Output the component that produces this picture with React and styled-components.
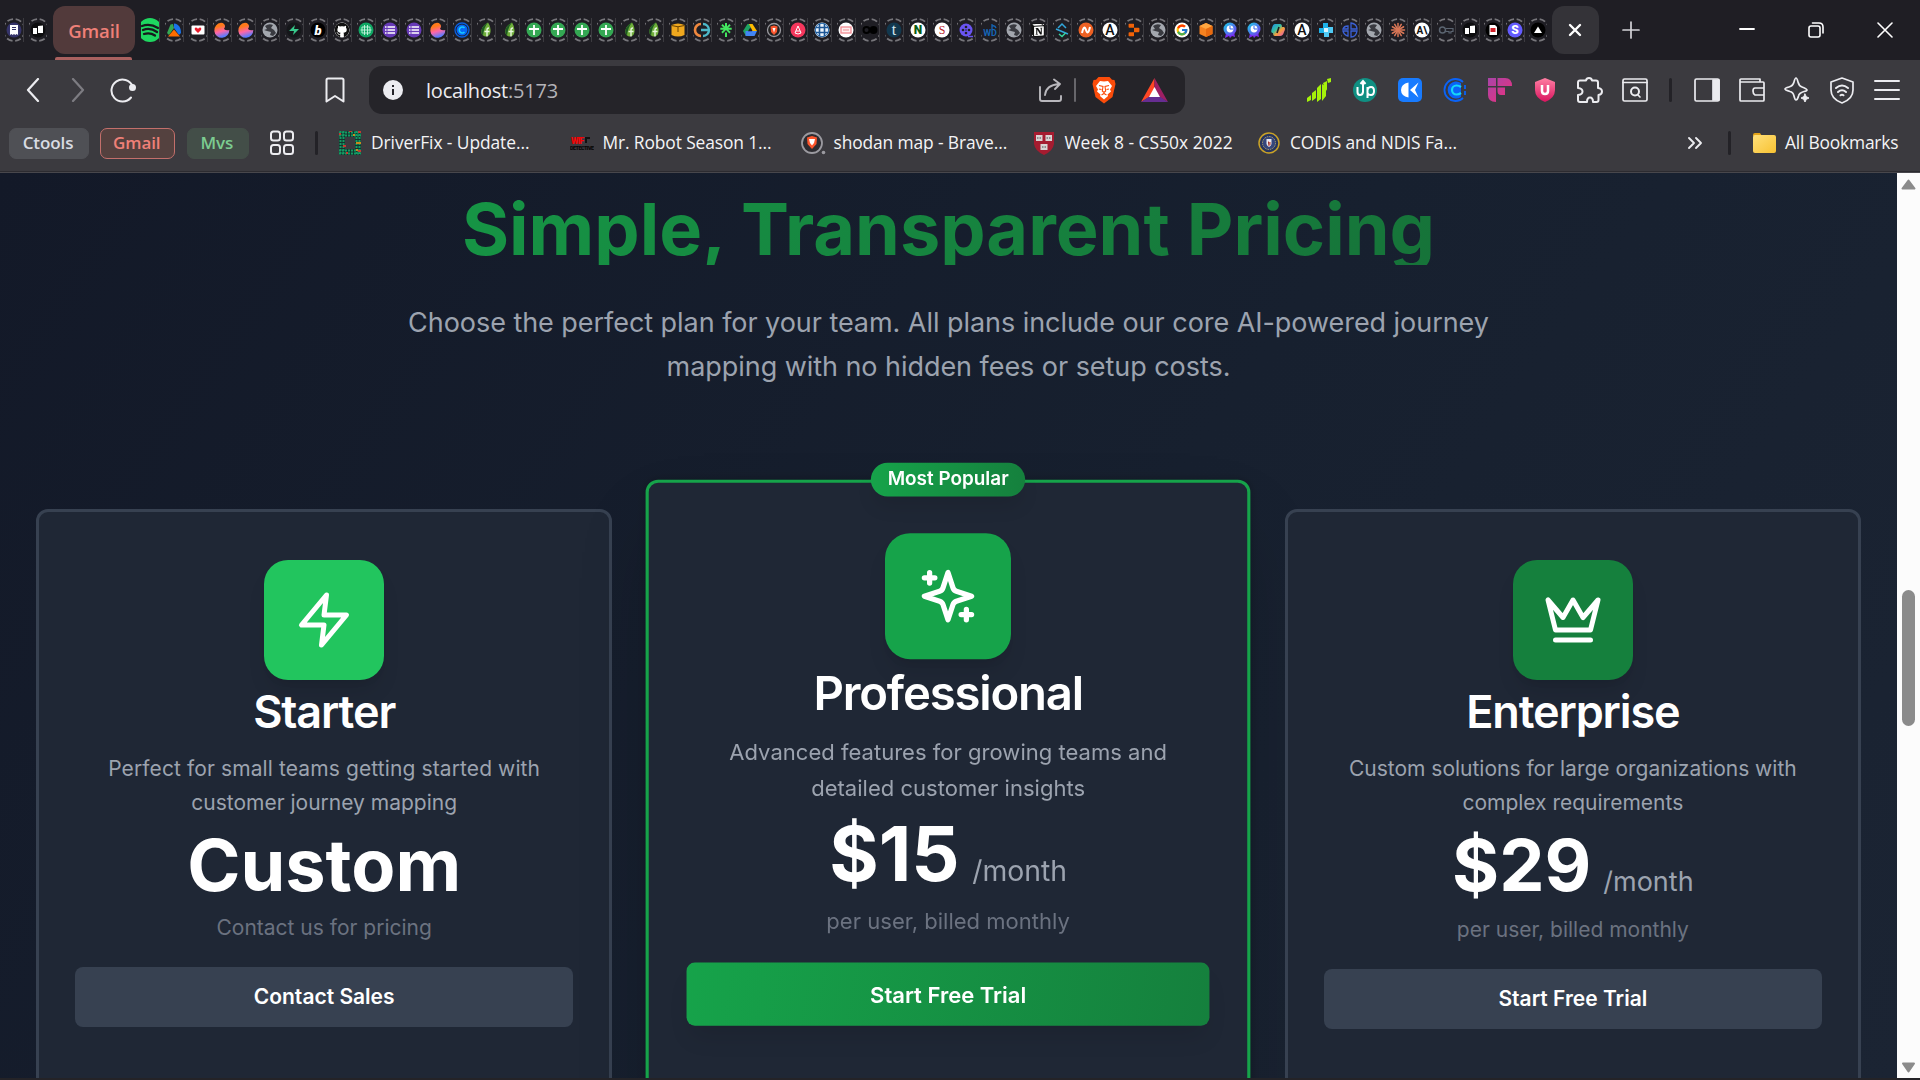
import React from "react";
import styled, { createGlobalStyle, css } from "styled-components";
import { FcGoogle } from "react-icons/fc";
import { FaGithub } from "react-icons/fa";
import { SiNotion, SiReplit, SiLinktree } from "react-icons/si";

const GlobalStyle = createGlobalStyle`
  * { box-sizing: border-box; }
  html, body { margin: 0; padding: 0; overflow: hidden; }
  body { background: #1f1e24; }
`;

const UI_FONT = `"Open Sans", "Noto Sans", sans-serif`;

const Window = styled.div`
  width: 1920px;
  height: 1080px;
  overflow: hidden;
  display: flex;
  flex-direction: column;
  background: #242327;
  font-family: ${UI_FONT};
  color: #f2f1f5;
  svg { display: block; flex: none; }
`;

/* ---------- tab strip ---------- */
const TabStrip = styled.div`
  height: 60px;
  flex: none;
  display: flex;
  align-items: center;
  background: #1f1e24;
  padding-left: 1.5px;
`;
const TabCell = styled.div`
  width: ${(p) => p.$w || 24}px;
  height: 24px;
  flex: none;
  display: flex;
  align-items: center;
  justify-content: space-between;
  &::before {
    content: "";
    width: 1px;
    height: 24px;
    background: ${(p) => (p.$line ? "#3c3b40" : "transparent")};
  }
`;
const TabGroup = styled.div`
  width: 82px;
  height: 60px;
  flex: none;
  margin: 0 2px 0 6.5px;
  display: flex;
  flex-direction: column;
  align-items: center;
  padding-top: 6px;
`;
const TabGroupLabel = styled.div`
  width: 82px;
  height: 48px;
  border-radius: 12px;
  background: #523a3b;
  color: #ef8078;
  font-size: 18.5px;
  font-weight: 600;
  letter-spacing: -0.1px;
  display: flex;
  align-items: center;
  justify-content: center;
`;
const TabGroupLine = styled.div`
  width: 77px;
  height: 3px;
  margin-top: 3px;
  margin-right: 1px;
  border-radius: 2px 2px 0 0;
  background: #a9615f;
`;
const ActiveTab = styled.div`
  width: 47px;
  height: 48px;
  flex: none;
  margin-left: 5px;
  border-radius: 12px;
  background: #343338;
  display: flex;
  align-items: center;
  justify-content: center;
`;
const StripButton = styled.div`
  width: ${(p) => p.$w}px;
  display: flex;
  justify-content: center;
`;

/* ---------- toolbar ---------- */
const Toolbar = styled.div`
  height: 60px;
  flex: none;
  display: flex;
  align-items: center;
  background: #3b3a3f;
  padding-left: 10px;
`;
const ToolCell = styled.div`
  width: 45px;
  height: 45px;
  flex: none;
  display: flex;
  align-items: center;
  justify-content: center;
`;
const Spacer = styled.div`
  width: ${(p) => p.$w}px;
  flex: none;
`;
const AddressBar = styled.div`
  width: 816px;
  height: 48px;
  margin: 0 112px 0 12px;
  flex: none;
  border-radius: 13px;
  background: #252429;
  display: flex;
  align-items: center;
  padding: 0 17px 0 14px;
`;
const Url = styled.div`
  margin-left: 23px;
  flex: 1;
  font-size: 20px;
  letter-spacing: -0.2px;
  color: #ececf0;
  span { color: #b4b3b8; }
`;
const Rule = styled.div`
  width: ${(p) => p.$w || 3}px;
  height: 24px;
  flex: none;
  border-radius: 2px;
  background: ${(p) => p.$color || "#232227"};
  margin: 0 ${(p) => p.$m || 0}px;
`;

/* ---------- bookmarks ---------- */
const Bookmarks = styled.div`
  height: 53px;
  flex: none;
  display: flex;
  align-items: center;
  padding: 0 22px 6px 9px;
  background: #3b3a3f;
  border-bottom: 1px solid #48474c;
  box-shadow: inset 0 -1px 0 #2c2b30;
`;
const tones = {
  grey: css`background: #4f5055; color: #d9dce3; border-color: #4f5055;`,
  red: css`background: #54413f; color: #ef8078; border-color: #c36f6b;`,
  green: css`background: #434e48; color: #7ccb90; border-color: #434e48;`,
};
const Chip = styled.div`
  width: ${(p) => p.$w}px;
  height: 31px;
  flex: none;
  margin-right: 11.5px;
  border: 1.5px solid;
  border-radius: 7px;
  padding: 0 1.5px 2px 0;
  font-size: 17px;
  font-weight: 600;
  letter-spacing: -0.1px;
  display: flex;
  align-items: center;
  justify-content: center;
  ${(p) => tones[p.$tone]}
`;
const Bookmark = styled.div`
  width: ${(p) => p.$w}px;
  flex: none;
  display: flex;
  align-items: center;
  white-space: nowrap;
  font-size: 17.4px;
  letter-spacing: ${(p) => p.$ls || 0}px;
  color: #f4f4f6;
`;
const BookmarkIcon = styled.div`
  width: 24px;
  margin-right: 9px;
  flex: none;
  display: flex;
  justify-content: center;
`;
const BookmarkText = styled.span`
  padding-bottom: 2px;
`;

/* ---------- page ---------- */
const Body = styled.div`
  height: 905px;
  flex: none;
  display: flex;
`;
const Page = styled.main`
  width: 1897px;
  height: 905px;
  overflow: hidden;
  padding: 20px 36px 0;
  background: linear-gradient(125deg, #131928 0%, #17202f 55%, #1b2433 100%);
  font-family: Inter, sans-serif;
  text-align: center;
`;
const Heading = styled.h2`
  margin: 0;
  font-size: 72px;
  line-height: 72px;
  font-weight: 700;
  color: transparent;
  background: linear-gradient(135deg, #16a34a 0%, #166534 100%);
  background-clip: text;
  -webkit-background-clip: text;
`;
const Lead = styled.p`
  margin: 36px auto 0;
  width: 1152px;
  font-size: 27px;
  line-height: 43.875px;
  letter-spacing: -0.05px;
  color: #9ca3af;
`;
const Grid = styled.div`
  margin-top: 120px;
  display: grid;
  grid-template-columns: repeat(3, 1fr);
  gap: 48px;
`;
const Card = styled.section`
  position: relative;
  height: 1175px;
  border: 3px solid ${(p) => (p.$featured ? "#16a34a" : "#374151")};
  border-radius: 12px;
  background: #1f2735;
  padding: 48px 36px 0;
  display: flex;
  flex-direction: column;
  align-items: center;
  ${(p) => p.$featured && css`
    transform: scale(1.05);
    box-shadow: 0 0 9px rgba(0, 0, 0, 0.2), 0 38px 75px -18px rgba(0, 0, 0, 0.25);
  `}
`;
const Badge = styled.div`
  position: absolute;
  top: -19.5px;
  left: 50%;
  transform: translateX(-50%);
  width: 147px;
  height: 32px;
  border-radius: 16px;
  padding-bottom: 1.5px;
  font-size: 18px;
  font-weight: 600;
  color: #fff;
  white-space: nowrap;
  display: flex;
  align-items: center;
  justify-content: center;
  background: linear-gradient(90deg, #16a34a, #15803d);
  box-shadow: 0 12px 18px -3px rgba(0, 0, 0, 0.1);
`;
const Tile = styled.div`
  width: 120px;
  height: 120px;
  flex: none;
  border-radius: 24px;
  background: ${(p) => p.$color};
  display: flex;
  align-items: center;
  justify-content: center;
  box-shadow: 0 15px 22px -5px rgba(0, 0, 0, 0.1), 0 6px 9px -6px rgba(0, 0, 0, 0.1);
`;
const PlanName = styled.h3`
  margin: 9px 0 0;
  font-size: 45px;
  line-height: 45px;
  font-weight: 600;
  letter-spacing: -1.125px;
  color: #fff;
`;
const Description = styled.p`
  margin: 18px 0 0;
  width: 450px;
  font-size: 21px;
  line-height: 34.125px;
  color: #9ca3af;
`;
const Line = styled.span`
  display: block;
  letter-spacing: ${(p) => p.$track || 0}px;
`;
const Price = styled.div`
  margin-top: 9px;
  height: ${(p) => (p.$unit ? 74 : 72)}px;
  font-size: 72px;
  line-height: 72px;
  font-weight: 700;
  color: #fff;
  display: flex;
  align-items: baseline;
`;
const Unit = styled.span`
  margin-left: 12px;
  font-size: 27px;
  line-height: 42px;
  font-weight: 400;
  color: #9ca3af;
`;
const Billing = styled.p`
  margin: 12px 0 24px;
  font-size: 21px;
  line-height: 30px;
  color: #6b7280;
`;
const Action = styled.button`
  width: 100%;
  height: 60px;
  flex: none;
  border: 0;
  border-radius: 8px;
  padding: 0 0 2px;
  font-family: inherit;
  font-size: 21px;
  font-weight: 600;
  color: #fff;
  background: #374151;
  ${(p) => p.$featured && css`
    padding-bottom: 0.5px;
    background: linear-gradient(100deg, #16a34a, #15803d);
    box-shadow: 0 15px 22px -5px rgba(0, 0, 0, 0.1);
  `}
`;

const ScrollBar = styled.div`
  width: 23px;
  height: 905px;
  background: #fcfcfc;
  display: flex;
  flex-direction: column;
  align-items: center;
  padding: 6px 0 5px;
`;
const Thumb = styled.div`
  width: 13px;
  height: 136px;
  margin: 400px 0 auto;
  border-radius: 7px;
  background: #8b8b8b;
`;

/* ---------- favicons ---------- */
const Dot = ({ fill = "#fff" }) => <circle cx="0" cy="0" r="7.5" fill={fill} />;
const Letter = ({ children, fill = "#fff", size = 11, weight = 700, font = "Roboto", y = 4, italic }) => (
  <text x="0" y={y} fill={fill} fontSize={size} fontWeight={weight} fontFamily={font} fontStyle={italic ? "italic" : "normal"} textAnchor="middle">{children}</text>
);
const Placed = ({ icon: Icon, color, size = 14 }) => (
  <Icon x={-size / 2} y={-size / 2} size={size} color={color} />
);

const art = {
  receipt: <><Dot fill="#35346a" /><path d="M-4-5H4V5L2.6 4 1.3 5 0 4-1.3 5-2.6 4-4 5Z" fill="#fff" /><path d="M-2-2.5h4M-2-.5h4" stroke="#35346a" /></>,
  cards: <><Dot fill="#0d0d0f" /><path d="M-5-2h4v6h-4zM0-4l5-.6V3H0z" fill="#fff" /></>,
  peaks: <><path d="M-7 3 -3.500-5.500-1-6 0-2-5 5z" fill="#34a853" /><path d="M0-6.500C5-6 7-2 7 3L5 5 0-2z" fill="#1a73e8" /><path d="M-6 6.500 0-.5 6 6.500z" fill="#ff6d00" /></>,
  mail: <><rect x="-6.5" y="-4.5" width="13" height="9" rx="1" fill="#fff" /><path d="M0 3-3 0q-1-2 1-2.500 1.500 0 2 1.500.5-1.500 2-1.500 2 .5 1 2.500z" fill="#ea1c2c" /></>,
  pie: <path d="M-1-7.200A7.500 7.500 0 1 0 7.300 0Q4 1 2-1 4-4 2-6 1-7.200-1-7.200Z" fill="url(#sunset)" />,
  globe: <><Dot fill="#a3a7ae" /><path d="M-5-4Q-1-7 3-5L1-2 4 0 6 3 3 6 0 5 1 2-3 1-6 0-3-1Z" fill="#393a40" /></>,
  bolt: <><Dot fill="#15171a" /><path d="M1-5-5 1H0L-1 5 5-1H0Z" fill="#37c98b" /></>,
  b: <><Dot fill="#000" /><Letter italic size={13} weight={900} y={4.500}>b</Letter></>,
  github: <><Dot /><Placed icon={FaGithub} color="#111" size={15} /></>,
  chip: <><Dot fill="#10a764" /><path d="M-4-3H4V3H-4ZM-1.500-5V5M1.500-5V5M-5.500 0H5.500" fill="none" stroke="#c8f5e0" strokeWidth="0.9" /></>,
  list: <><Dot fill="#673ab7" /><path d="M-2.500-3H5M-2.500 0H5M-2.500 3H5" stroke="#fff" strokeWidth="1.700" /><path d="M-5-3h1.500M-5 0h1.500M-5 3h1.500" stroke="#fff" strokeWidth="1.700" /></>,
  calC: <><circle r="7" fill="none" stroke="#0a5fe0" strokeWidth="1.300" /><circle r="5.500" fill="#0567f5" /><path d="M2.500-2A3 3 0 1 0 2.500 2" fill="none" stroke="#19c8ff" strokeWidth="1.600" /></>,
  leaf: <><path d="M2-7.500Q5-3 4.500 2 4 6.500-1 6.500-5.500 5-4.500 0-4-4 2-7.500Z" fill="#6fae3a" /><path d="M2-7.500Q-4-4-4.500 0-5 4-3 5.500-2-3 2-7.500Z" fill="#1d5a22" /><path d="M1 6.500V0Q1-2 3-2M-1.500 1.500H3.500" stroke="#e8f8df" strokeWidth="1.400" fill="none" /></>,
  sheet: <><Dot fill="#34a853" /><path d="M0-5V5M-5-1H5" stroke="#fff" strokeWidth="1.800" /></>,
  box: <><path d="M-6.500-5Q0-8 6.500-5V5Q0 8-6.500 5Z" fill="#f0a81e" /><path d="M-6.500-4.500Q0-2 6.500-4.500M0-3v5" stroke="#6a4300" fill="none" /></>,
  split: <><path d="M-1-6A6 6 0 0 0-1 6" fill="none" stroke="#f0883e" strokeWidth="2.600" /><path d="M1-6A6 6 0 0 1 1 6M-1 0H6" fill="none" stroke="#4db8c8" strokeWidth="2.400" /></>,
  tree: <Placed icon={SiLinktree} color="#43e660" size={14} />,
  drive: <><path d="M-2.500-6H2.500L0-1-4 6-7 1Z" fill="#1ea362" /><path d="M-1-6H2.500L7 1H2.500Z" fill="#ffba00" /><path d="M-4.500 1H7L4.500 6H-4.500Z" fill="#4285f4" /><path d="M0-2 2 1.200h-4Z" fill="#1f1e24" /></>,
  brave: <><circle r="6.500" fill="#222" stroke="#9a9aa0" strokeWidth="1.300" /><path d="M-3.500-3.500 0-4.500 3.500-3.500 3 2 0 5-3 2Z" fill="#fb542b" /><path d="M-1.500-2H1.500L0 2.500Z" fill="#fff" /></>,
  red: <><Dot fill="#f5365c" /><path d="M-3 3 0-4 3 3Q0 5-3 3ZM-2 1H2" fill="none" stroke="#fff" /></>,
  grid: <><Dot fill="#e9f2fb" /><path d="M-6.500-2.500H6.500M-6.500 2.500H6.500M-2.500-6.500V6.500M2.500-6.500V6.500" stroke="#1d5695" strokeWidth="1.600" /><circle r="6.700" fill="none" stroke="#2667a8" /></>,
  pink: <><Dot /><rect x="-5" y="-3" width="10" height="6" fill="#fff0f0" stroke="#f28b92" strokeWidth="1.300" /><path d="M-3 0H3" stroke="#f28b92" /></>,
  co: <><circle cx="-3.500" r="3" fill="none" stroke="#000" strokeWidth="2" /><circle cx="3.500" r="4" fill="#000" /></>,
  t: <><Dot fill="#12384e" /><Letter fill="#d5e9ee" size={16} weight={400} font="Liberation Serif" y={5}>t</Letter></>,
  n: <><Dot /><Letter fill="#0a5c14" size={12} weight={900}>N</Letter></>,
  s: <><Dot /><Letter fill="#b7212c" size={12} weight={500} font="Liberation Serif">S</Letter></>,
  film: <><circle r="6.500" fill="#6a55f2" /><path d="M2 6.500H7" stroke="#6a55f2" strokeWidth="1.500" /><g fill="#1f1e24"><circle r="0.8" /><circle cx="-3" r="1.300" /><circle cx="3" r="1.300" /><circle cy="-3" r="1.300" /><circle cy="3" r="1.300" /></g></>,
  wd: <><Letter fill="#1565b5" size={9} y={6}>WD</Letter><path d="M2-1V-6M2-4Q5-5 6-2" stroke="#1565b5" fill="none" strokeWidth="1.300" /></>,
  notion: <><rect x="-6" y="-6" width="12" height="12" fill="#fff" /><Placed icon={SiNotion} color="#111" size={14} /></>,
  arrows: <><path d="M-4-2 0-6 4-2M-6-1 6 4" stroke="#31a7dc" fill="none" strokeWidth="1.500" /><path d="M-3 4 0 6.500 3.500 3" stroke="#38d39f" fill="none" strokeWidth="1.500" /></>,
  wave: <><Dot fill="#ee6123" /><path d="M-4 3Q-2-6 0 0T4-3" fill="none" stroke="#fff" strokeWidth="2" /></>,
  a: <><Dot /><Letter fill="#101010" size={14} weight={500} y={5}>A</Letter></>,
  replit: <Placed icon={SiReplit} color="#f26207" size={13} />,
  google: <><Dot /><Placed icon={FcGoogle} size={13} /></>,
  cube: <><path d="M0-7 6.500-4V4L0 7-6.500 4V-4Z" fill="#f58220" /><path d="M-6.500-4 0-1 6.500-4 0-7Z" fill="#ffa640" /><path d="M0-1V7L6.500 4V-4Z" fill="#e76a10" /></>,
  medal: <><path d="M-4 3-5 8-1 6 0 8 2 6 5 7 4 2Z" fill="#7a2df0" /><circle cy="-1" r="6.500" fill="url(#ocean)" /><circle cy="-1" r="3.400" fill="#fff" /><path d="M0-4V-1H3" stroke="#3468f0" fill="none" /></>,
  copilot: <><path d="M-3-6H2Q4-6 4-3H6Q8-2 6 2 5 6 2 6H-3Q-5 6-5 3-8 3-6-2-5-6-3-6Z" fill="url(#rainbow)" /><path d="M1-3-1 3" stroke="#1f1e24" strokeWidth="1.600" /></>,
  blocks: <><path d="M-3-7H2V-2H-3ZM-7-2H-2V3H-7Z" fill="#1db2e8" /><path d="M2-3H7V3H2ZM-2 2H3V7H-2Z" fill="#4fc9f3" /><path d="M-2-2H2V2H-2Z" fill="#d8f3fc" /></>,
  quads: <path d="M1-7Q7-6 7-1H1ZM-2-4V-1H-7Q-6-4-2-4ZM-2 6Q-6 5-7 1H-2ZM1 1H7Q6 7 1 7Z" fill="none" stroke="#3b61d6" strokeWidth="1.300" />,
  burst: <g stroke="#d97757" strokeWidth="1.500" strokeLinecap="round">{[0, 30, 60, 90, 120, 150].map((r) => <path key={r} d="M0-6.500V6.500" transform={`rotate(${r})`} />)}</g>,
  ai: <><Dot /><Letter fill="#111" size={10}>A\</Letter></>,
  key: <><circle cx="-3.500" r="3" fill="none" stroke="#5b6470" strokeWidth="1.500" /><path d="M0-1.500H7V1.500H5V3H3V1.500H0" fill="none" stroke="#5b6470" strokeWidth="1.200" /></>,
  doc: <><Dot fill="#000" /><path d="M-3.500-5H2L4-3V5H-3.500Z" fill="#fff" /><path d="M-2.500-2H2.500V2H-2.500Z" fill="#d2222b" /></>,
  stripe: <><Dot fill="#635bff" /><Letter size={12} weight={900}>S</Letter></>,
  tri: <><Dot fill="#000" /><path d="M0-3.500 4 3H-4Z" fill="#fff" /></>,
};

const Favicon = ({ name }) => (
  <svg width="18" height="24" viewBox="-9 -12 18 24">
    <circle r="11" fill="none" stroke="#77767b" strokeWidth="1.800" strokeDasharray="5.900 2.740" strokeDashoffset="-1.400" />
    {art[name]}
  </svg>
);

const tabs = "peaks mail pie pie globe bolt b github chip list list pie calC leaf leaf sheet sheet sheet sheet leaf leaf box split tree drive brave red grid pink co t n s film wd globe notion arrows wave a replit globe google cube medal medal copilot a blocks quads globe burst ai key".split(" ");
const lateTabs = ["cards", "doc", "stripe", "tri"];

const HiddenDefs = styled.svg`
  position: absolute;
`;
const Gradients = () => (
  <HiddenDefs width="0" height="0">
    <defs>
      <linearGradient id="sunset" x1="0" y1="0" x2="0.3" y2="1"><stop offset="0.300" stopColor="#ff7a1a" /><stop offset="0.650" stopColor="#ff66a8" /><stop offset="1" stopColor="#5b7cff" /></linearGradient>
      <linearGradient id="ocean" x1="0" y1="0" x2="1" y2="1"><stop stopColor="#19d3e8" /><stop offset="1" stopColor="#7a2df0" /></linearGradient>
      <linearGradient id="rainbow" x1="0" y1="0" x2="1" y2="1"><stop stopColor="#1d8cf0" /><stop offset="0.400" stopColor="#37c1a0" /><stop offset="0.600" stopColor="#f5a03a" /><stop offset="1" stopColor="#e64fc0" /></linearGradient>
      <linearGradient id="berry" x1="0" y1="0" x2="1" y2="1"><stop stopColor="#a844a8" /><stop offset="1" stopColor="#f0307a" /></linearGradient>
      <linearGradient id="rose" x1="0" y1="0" x2="0" y2="1"><stop stopColor="#ff7fa3" /><stop offset="1" stopColor="#d9145f" /></linearGradient>
      <linearGradient id="folder" x1="0" y1="0" x2="1" y2="1"><stop stopColor="#ffe07a" /><stop offset="1" stopColor="#f8c232" /></linearGradient>
    </defs>
  </HiddenDefs>
);

const Stroke = ({ w = 26, h = 26, sw = 1.700, color = "#ececf0", children }) => (
  <svg width={w} height={h} viewBox={`0 0 ${w} ${h}`} fill="none" stroke={color} strokeWidth={sw} strokeLinecap="round" strokeLinejoin="round">{children}</svg>
);

const BraveLion = ({ w = 24, h = 28 }) => (
  <svg width={w} height={h} viewBox="0 0 24 28">
    <path d="M6.500 1H17.500L20 3.800 22.500 4 23.500 8 20.500 21 12 27.500 3.500 21 .5 8 1.500 4 4 3.800Z" fill="#fb4c0a" />
    <path d="M12 5.500 16 5 20 10 18 13.500 19 15.500 15.500 18.500 16 20 12 23.500 8 20 8.500 18.500 5 15.500 6 13.500 4 10 8 5Z" fill="#fff" />
    <path d="M7 9.500 11 10.500 10.300 15 12 16.500 13.700 15 13 10.500 17 9.500M9.500 19 12 17.500 14.500 19M7 13 9.500 13.500M17 13 14.500 13.500" fill="none" stroke="#fb4c0a" strokeWidth="1.100" />
  </svg>
);

const Extensions = () => (
  <>
    <ToolCell><svg width="25" height="25" viewBox="0 0 25 25" fill="#a5f20a"><path d="M0 20 4 17V22L0 24ZM5 15 9 12V20L5 23ZM10 10 14 6V21L10 24ZM15 6 19 9V18L15 23ZM16 5 20 3V13L17 8ZM20 1 24 0V4L21 5Z" /></svg></ToolCell>
    <ToolCell><svg width="24" height="24" viewBox="0 0 24 24"><circle cx="12" cy="12" r="12" fill="#108f82" /><path d="M4.500 9V14Q4.500 17 7 17T10 14V4M7.500 6 10 3 12.500 6M14.500 20V9M14.500 12Q15 9 18 9T21 13 18 17 14.500 15" fill="none" stroke="#fff" strokeWidth="2" /></svg></ToolCell>
    <ToolCell><svg width="24" height="24" viewBox="0 0 24 24"><rect width="24" height="24" rx="5" fill="#187bff" /><path d="M10.500 4.500V19.500Q3 18 3 12T10.500 4.500ZM20.500 4.500 17 12 20.500 19.500 12 12Z" fill="#fff" /></svg></ToolCell>
    <ToolCell><svg width="24" height="24" viewBox="0 0 24 24" fill="none"><path d="M20 4A11 11 0 1 0 20 20" stroke="#0b63f6" strokeWidth="1.800" /><path d="M18 5A8.500 8.500 0 1 0 18 19Z" fill="#0b63f6" /><path d="M22 7V11M22 13V17" stroke="#0b63f6" strokeWidth="1.800" /><path d="M18 9Q16 7.500 13.500 7.500A4.500 4.500 0 0 0 13.500 16.500Q16 16.500 18 15" stroke="#16d6f7" strokeWidth="2.200" /></svg></ToolCell>
    <ToolCell><svg width="24" height="24" viewBox="0 0 24 24" fill="url(#berry)"><path d="M0 0H8V8H0ZM9.500 0H17Q24 0 24 8H9.500ZM0 9.500H8V24Q0 24 0 17ZM9.500 9.500H17V17H13Q9.500 17 9.500 13Z" /></svg></ToolCell>
    <ToolCell><svg width="22" height="24" viewBox="0 0 22 24"><path d="M11 0 21 4V12Q21 20 11 24 1 20 1 12V4Z" fill="url(#rose)" /><path d="M8 7V13Q8 16 11 16T14 13V7" fill="none" stroke="#fff" strokeWidth="2.500" /></svg></ToolCell>
    <ToolCell><Stroke w={26} h={26} sw={2}><path d="M8 3.500H9Q9.500 1 12 1T15 3.500H19Q21 3.500 21 5.500V11Q25 11.500 25 14.500T21.500 18V23Q21.500 25 19.500 25H16Q16 20.500 13 20.500T10 25H3Q1 25 1 23V18Q5.500 17.500 5.500 14.500T1 11V5.500Q1 3.500 3 3.500Z" /></Stroke></ToolCell>
    <ToolCell><Stroke w={26} h={24}><rect x="1" y="1" width="24" height="22" rx="1.500" /><path d="M1 4.500H25M16 17 18 19" /><circle cx="13" cy="13.500" r="4" strokeWidth="2" /></Stroke></ToolCell>
  </>
);

const BrowserActions = () => (
  <>
    <ToolCell><Stroke w={26} h={24}><rect x="1" y="1" width="24" height="22" rx="1.500" /><path d="M19 2H25V22H19Z" fill="#ececf0" /></Stroke></ToolCell>
    <ToolCell><Stroke w={26} h={24}><path d="M1 4V2Q1 1 2 1H21V4H1ZV22Q1 23 2 23H24Q25 23 25 22V5Q25 4 24 4H21M25 10H16Q14 10 14 13T16 17H25" /></Stroke></ToolCell>
    <ToolCell><Stroke w={26} h={26}><path d="M12 1Q13 1 14 5 15 9 18 10 23 12 23 13 23 14 20 14.500 15 16 14.500 19 13.500 23 12 23 11 23 10 19 9 15 6 14.500 1 13 1 12 1 11 5 10 9 9 10 5 11 1 12 1Z" /><path d="M21 17 22.300 19.700 25 21 22.300 22.300 21 25 19.700 22.300 17 21 19.700 19.700Z" fill="#ececf0" strokeWidth="1" /></Stroke></ToolCell>
    <ToolCell><Stroke w={24} h={27}><path d="M12 1 23 5V13Q23 22 12 26 1 22 1 13V5Z" /><path d="M6 11Q12 6 18 11M8 15Q12 11.500 16 15M10.500 18.300Q12 17.200 13.500 18.300" strokeWidth="2" /></Stroke></ToolCell>
    <ToolCell><Stroke w={26} h={22} sw={2}><path d="M1 2H25M1 11H25M1 20H25" /></Stroke></ToolCell>
  </>
);

const bookmarks = [
  { label: "DriverFix - Update...", w: 231.500, ls: -0.08, icon: <svg width="22" height="24" viewBox="0 0 22 24"><rect width="22" height="24" fill="#12352e" /><g fill="none" strokeDasharray="2 1"><path d="M1.500 0V24M4.500 0V24M17.500 0V24M20.500 0V24" stroke="#149a63" strokeWidth="2" /><path d="M0 1.500H22M0 22.500H22M0 4.500H22M0 19.500H22" stroke="#149a63" strokeWidth="2" /></g><path d="M6 6H16V18H6Z" fill="#3b3a3f" /><path d="M0 3h2M10 0h3M19 1h3M4 15h3M19 20h3M7 22h2" stroke="#c23b31" strokeWidth="2" /><path d="M14 4h2M17 12h5M17 19h2" stroke="#c88a1e" strokeWidth="2" /></svg> },
  { label: "Mr. Robot Season 1...", w: 231, ls: -0.12, icon: <svg width="24" height="14" viewBox="0 0 24 14"><text x="1" y="7.500" fontSize="8.500" fontWeight="900" fontFamily="Roboto" fill="#f00505" textLength="13">WTF</text><path d="M15 1H20V3H17V7H15Z" fill="#111" /><text x="0" y="13.500" fontSize="5.500" fontWeight="900" fontFamily="Roboto" fill="#070707" textLength="24">DETECTIVE</text></svg> },
  { label: "shodan map - Brave...", w: 231, ls: -0.12, icon: <svg width="26" height="24" viewBox="0 0 26 24"><circle cx="12" cy="12" r="10" fill="#2c2b30" stroke="#9b9aa0" strokeWidth="1.800" /><path d="M7 6.500 12 5 17 6.500 16.500 13 12 18 7.500 13Z" fill="#fb542b" /><path d="M9 8H15L14 12 12 14.500 10 12Z" fill="#fff" /><circle cx="23.500" cy="21.500" r="1.800" fill="#9b9aa0" /></svg> },
  { label: "Week 8 - CS50x 2022", w: 225.500, ls: 0.03, icon: <svg width="20" height="23" viewBox="0 0 20 23"><path d="M0 0H20V12Q19 19 10 23 1 19 0 12Z" fill="#a51c30" /><path d="M2 3H8.500V9H2ZM11.500 3H18V9H11.500ZM6.500 12H13.500V18H6.500Z" fill="#d9d4d4" /><path d="M3 6H7.500M12.500 6H17M8 15H12" stroke="#444" strokeDasharray="1.500 1" /></svg> },
  { label: "CODIS and NDIS Fa...", w: 424, ls: -0.08, icon: <svg width="22" height="22" viewBox="0 0 22 22"><circle cx="11" cy="11" r="10" fill="#26345f" stroke="#c9a227" strokeWidth="1.500" /><circle cx="11" cy="11" r="6.500" fill="#35467c" stroke="#b6a56a" strokeDasharray="1.500 1" /><path d="M8.500 7H13.500V12Q13 14 11 15 9 14 8.500 12Z" fill="#e8e8ee" /><path d="M10 10h1v4M12 10v3" stroke="#c23b31" /></svg> },
];

const Zap = () => <polygon points="13 2 3 14 12 14 11 22 21 10 12 10 13 2" />;
const Sparkles = () => <path d="m12 3-1.912 5.813a2 2 0 0 1-1.275 1.275L3 12l5.813 1.912a2 2 0 0 1 1.275 1.275L12 21l1.912-5.813a2 2 0 0 1 1.275-1.275L21 12l-5.813-1.912a2 2 0 0 1-1.275-1.275L12 3ZM5 3v4M19 17v4M3 5h4M17 19h4" />;
const Crown = () => <path d="m2 4 3 12h14l3-12-6 7-4-7-4 7-6-7zm3 16h14" />;

const plans = [
  { name: "Starter", icon: Zap, color: "#22c55e", text: ["Perfect for small teams getting started with", "customer journey mapping"], track: 0.11, price: "Custom", billing: "Contact us for pricing", action: "Contact Sales" },
  { name: "Professional", icon: Sparkles, color: "#16a34a", text: ["Advanced features for growing teams and", "detailed customer insights"], price: "$15", unit: "/month", billing: "per user, billed monthly", action: "Start Free Trial", featured: true },
  { name: "Enterprise", icon: Crown, color: "#15803d", text: ["Custom solutions for large organizations with", "complex requirements"], price: "$29", unit: "/month", billing: "per user, billed monthly", action: "Start Free Trial" },
];

function PlanCard({ plan }) {
  const Icon = plan.icon;
  return (
    <Card $featured={plan.featured}>
      {plan.featured && <Badge>Most Popular</Badge>}
      <Tile $color={plan.color}>
        <svg width="60" height="60" viewBox="0 0 24 24" fill="none" stroke="#fff" strokeWidth="2" strokeLinecap="round" strokeLinejoin="round"><Icon /></svg>
      </Tile>
      <PlanName>{plan.name}</PlanName>
      <Description>
        <Line $track={plan.track}>{plan.text[0]}</Line>
        <Line>{plan.text[1]}</Line>
      </Description>
      <Price $unit={plan.unit}>{plan.price}{plan.unit && <Unit>{plan.unit}</Unit>}</Price>
      <Billing>{plan.billing}</Billing>
      <Action $featured={plan.featured}>{plan.action}</Action>
    </Card>
  );
}

export default function App() {
  return (
    <Window>
      <GlobalStyle />
      <Gradients />
      <TabStrip>
        <TabCell $w={21}><Favicon name="receipt" /></TabCell>
        <TabCell $w={24} $line><Favicon name="cards" /></TabCell>
        <TabGroup>
          <TabGroupLabel>Gmail</TabGroupLabel>
          <TabGroupLine />
        </TabGroup>
        <TabCell $w={22}>
          <svg width="18" height="24" viewBox="-9 -12 18 24"><circle r="12" fill="#1ed760" /><path d="M-8-4Q0-7 8-2M-7 0Q0-3 7 2M-6 4Q0 2 5 5.500" fill="none" stroke="#17191c" strokeWidth="2.200" strokeLinecap="round" /></svg>
        </TabCell>
        {tabs.map((name, i) => <TabCell key={i} $line><Favicon name={name} /></TabCell>)}
        {lateTabs.map((name, i) => <TabCell key={name} $w={i ? 22.500 : 24} $line><Favicon name={name} /></TabCell>)}
        <ActiveTab><Stroke w={14} h={14} sw={2.400} color="#fff"><path d="M2 2 12 12M12 2 2 12" /></Stroke></ActiveTab>
        <StripButton $w={64}><Stroke w={18} h={18} sw={1.700} color="#d4d3d8"><path d="M9 1V17M1 9H17" /></Stroke></StripButton>
        <Spacer $w={49} />
        <StripButton $w={70}><Stroke w={16} h={16} sw={1.800} color="#fff"><path d="M1 7H15" /></Stroke></StripButton>
        <StripButton $w={69}><Stroke w={16} h={16} sw={1.600} color="#fff"><rect x="1" y="4" width="11" height="11" rx="2" /><path d="M4.500 1H11Q15 1 15 5V11" /></Stroke></StripButton>
        <StripButton $w={68}><Stroke w={16} h={16} sw={1.600} color="#fff"><path d="M1 1 15 15M15 1 1 15" /></Stroke></StripButton>
      </TabStrip>

      <Toolbar>
        <ToolCell><Stroke w={14} h={24} sw={2.200}><path d="M12 1 2 12 12 23" /></Stroke></ToolCell>
        <ToolCell><Stroke w={14} h={24} sw={2.200} color="#7d7c82"><path d="M2 1 12 12 2 23" /></Stroke></ToolCell>
        <ToolCell><Stroke w={26} h={26} sw={2}><path d="M22.500 9A11 11 0 1 0 21 20.500" /><circle cx="22.500" cy="10.500" r="2.500" fill="#ececf0" /></Stroke></ToolCell>
        <Spacer $w={167} />
        <ToolCell><Stroke w={20} h={26} sw={2}><path d="M1.500 3Q1.500 1.500 3 1.500H17Q18.500 1.500 18.500 3V24.500L10 19 1.500 24.500Z" /></Stroke></ToolCell>
        <AddressBar>
          <svg width="20" height="20" viewBox="0 0 20 20"><circle cx="10" cy="10" r="10" fill="#ececf0" /><path d="M10 9V15M10 5V7" stroke="#252429" strokeWidth="2" /></svg>
          <Url>localhost<span>:5173</span></Url>
          <Stroke w={23} h={24} color="#b9b8bd" sw={1.900}><path d="M1 9V21Q1 23 3 23H20Q22 23 22 21V18M6 17Q7 7 20 6M15 1.500 21 6 16 11" /></Stroke>
          <Rule $w={2} $m={12} $color="#67666b" />
          <Spacer $w={4} />
          <BraveLion />
          <Spacer $w={25} />
          <svg width="27" height="24" viewBox="0 0 27 24"><path d="M13.500 0 0 24 13.500 16Z" fill="#ff4724" /><path d="M13.500 0 27 24 13.500 16Z" fill="#9e1f63" /><path d="M0 24H27L13.500 15Z" fill="#662d91" /><path d="M13.500 9 19 19H8Z" fill="#fff" /></svg>
        </AddressBar>
        <Extensions />
        <Spacer $w={12} /><Rule /><Spacer $w={12} />
        <BrowserActions />
      </Toolbar>

      <Bookmarks>
        <Chip $w={79.500} $tone="grey">Ctools</Chip>
        <Chip $w={75} $tone="red">Gmail</Chip>
        <Chip $w={62} $tone="green">Mvs</Chip>
        <Spacer $w={9} />
        <Stroke w={26} h={26} sw={2}><rect x="2" y="1.500" width="9" height="9" rx="2.500" /><rect x="15" y="1.500" width="9" height="9" rx="2.500" /><rect x="2" y="15" width="9" height="9" rx="2.500" /><rect x="15" y="15" width="9" height="9" rx="2.500" /></Stroke>
        <Spacer $w={20} /><Rule /><Spacer $w={20} />
        {bookmarks.map((b) => (
          <Bookmark key={b.label} $w={b.w} $ls={b.ls}><BookmarkIcon>{b.icon}</BookmarkIcon><BookmarkText>{b.label}</BookmarkText></Bookmark>
        ))}
        <Spacer $w={6} />
        <Stroke w={16} h={14} sw={1.900}><path d="M2 2 7 7 2 12M9 2 14 7 9 12" /></Stroke>
        <Spacer $w={25} /><Rule /><Spacer $w={21} />
        <Bookmark $w={146} $ls={-0.2}>
          <BookmarkIcon><svg width="23" height="20" viewBox="0 0 23 20"><path d="M0 2Q0 0 2 0H7L9 3H0Z" fill="#e2a218" /><rect y="2" width="23" height="18" rx="2" fill="url(#folder)" /></svg></BookmarkIcon>
          <BookmarkText>All Bookmarks</BookmarkText>
        </Bookmark>
      </Bookmarks>

      <Body>
        <Page>
          <Heading>Simple, Transparent Pricing</Heading>
          <Lead>Choose the perfect plan for your team. All plans include our core AI-powered journey mapping with no hidden fees or setup costs.</Lead>
          <Grid>{plans.map((plan) => <PlanCard key={plan.name} plan={plan} />)}</Grid>
        </Page>
        <ScrollBar>
          <svg width="15" height="11" viewBox="0 0 15 11"><path d="M7.500 1.500 13.500 9.500H1.500Z" fill="#8b8b8b" stroke="#8b8b8b" strokeWidth="2" strokeLinejoin="round" /></svg>
          <Thumb />
          <svg width="15" height="11" viewBox="0 0 15 11"><path d="M7.500 9.500 13 1.500H2Z" fill="#8b8b8b" stroke="#8b8b8b" strokeWidth="2" strokeLinejoin="round" /></svg>
        </ScrollBar>
      </Body>
    </Window>
  );
}
